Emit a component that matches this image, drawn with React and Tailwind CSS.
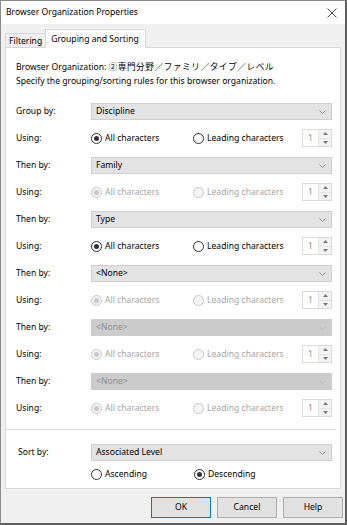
import React from 'react';

const font = { fontFamily: '"Noto Sans", "Noto Sans CJK JP", sans-serif' };

const Chevron = ({ disabled }) => (
  <svg width="7" height="4" viewBox="0 0 7 4" className="shrink-0">
    <polyline points="0.5,0.5 3.5,3.5 6.5,0.5" fill="none" stroke={disabled ? '#bdbdbd' : '#8a8a8a'} strokeWidth="0.9" />
  </svg>
);

const Select = ({ value, disabled }) => (
  <div
    className={`flex h-[17px] items-center justify-between border pl-[4px] pr-[5px] leading-none ${
      disabled ? 'border-[#cccccc] bg-[#cccccc] text-[#8d8d8d]' : 'border-[#cfcfcf] bg-[#e3e3e3] text-black'
    }`}
  >
    <span>{value}</span>
    <Chevron disabled={disabled} />
  </div>
);

const Radio = ({ checked, disabled, label }) => (
  <div className={`flex items-center gap-[3px] whitespace-nowrap ${disabled ? 'text-[#a6a6a6]' : 'text-black'}`}>
    <span
      className={`flex h-[11px] w-[11px] shrink-0 items-center justify-center rounded-full border ${
        disabled ? 'border-[#c8c8c8] bg-[#f4f4f4]' : 'border-[#333333] bg-white'
      }`}
    >
      {checked && <span className={`h-[5px] w-[5px] rounded-full ${disabled ? 'bg-[#c8c8c8]' : 'bg-[#333333]'}`} />}
    </span>
    <span>{label}</span>
  </div>
);

const Spinner = () => (
  <div className="flex h-[18px] w-[30px] border border-[#dadada] bg-white">
    <div className="flex-1 pl-[5px] text-[#8d8d8d] leading-[16px]">1</div>
    <div className="flex w-[13px] flex-col border-l border-[#e3e3e3]">
      <div className="flex flex-1 items-center justify-center border-b border-[#e3e3e3] bg-[#f3f3f3]">
        <svg width="5" height="3" viewBox="0 0 5 3">
          <polygon points="2.5,0 5,3 0,3" fill="#7a7a7a" />
        </svg>
      </div>
      <div className="flex flex-1 items-center justify-center bg-[#f3f3f3]">
        <svg width="5" height="3" viewBox="0 0 5 3">
          <polygon points="0,0 5,0 2.5,3" fill="#7a7a7a" />
        </svg>
      </div>
    </div>
  </div>
);

const groups = [
  { label: 'Group by:', value: 'Discipline', selDisabled: false, radiosDisabled: false },
  { label: 'Then by:', value: 'Family', selDisabled: false, radiosDisabled: true },
  { label: 'Then by:', value: 'Type', selDisabled: false, radiosDisabled: false },
  { label: 'Then by:', value: '<None>', selDisabled: false, radiosDisabled: true },
  { label: 'Then by:', value: '<None>', selDisabled: true, radiosDisabled: true },
  { label: 'Then by:', value: '<None>', selDisabled: true, radiosDisabled: true },
];

const Button = ({ children, primary }) => (
  <button
    className={`h-[21px] w-[60px] border bg-[#e1e1e1] text-black leading-none ${
      primary ? 'border-[#0078d7]' : 'border-[#adadad]'
    }`}
  >
    {children}
  </button>
);

export default function App() {
  return (
    <div
      className="flex h-[525px] w-[347px] flex-col border-t border-l border-r-2 border-b-2 border-t-[#8a8a8a] border-l-[#8a8a8a] border-r-[#5f5f5f] border-b-[#5f5f5f] bg-[#f0f0f0] text-[8.6px] text-black"
      style={font}
    >
      {/* Title bar */}
      <div className="flex h-[23px] shrink-0 items-center justify-between bg-white pl-[5px] pr-[8px]">
        <span>Browser Organization Properties</span>
        <svg width="10" height="10" viewBox="0 0 10 10">
          <path d="M0.5 0.5 L9.5 9.5 M9.5 0.5 L0.5 9.5" stroke="#333" strokeWidth="0.9" />
        </svg>
      </div>

      {/* Tabs */}
      <div className="mt-[5px] flex items-end pl-[4px]">
        <div className="mb-[-1px] flex h-[15px] items-center border-t border-l border-[#d9d9d9] bg-[#f0f0f0] pl-[3px] pr-[3px] leading-none">
          Filtering
        </div>
        <div className="relative z-10 mb-[-1px] flex h-[19px] items-center border-t border-l border-r border-[#d9d9d9] bg-white pl-[5px] pr-[6px] leading-none">
          Grouping and Sorting
        </div>
      </div>

      {/* Panel */}
      <div className="ml-[4px] w-[336px] border border-[#d9d9d9] bg-white pl-[10px] pr-[7px] pt-[12px] pb-[7px]">
        <div className="leading-[14px] whitespace-nowrap">
          <div>
            Browser Organization: <span className="tracking-[0.6px]">②専門分野／ファミリ／タイプ／レベル</span>
          </div>
          <div>Specify the grouping/sorting rules for this browser organization.</div>
        </div>

        <div className="mt-[15px] flex flex-col gap-[9px]">
          {groups.map((g, i) => (
            <div key={i} className="flex flex-col gap-[8px]">
              <div className="grid grid-cols-[75px_241px] items-center">
                <span className="leading-none">{g.label}</span>
                <Select value={g.value} disabled={g.selDisabled} />
              </div>
              <div className="grid h-[20px] grid-cols-[75px_102px_109px_30px] items-center leading-none">
                <span>Using:</span>
                <Radio checked disabled={g.radiosDisabled} label="All characters" />
                <Radio disabled={g.radiosDisabled} label="Leading characters" />
                <Spinner />
              </div>
            </div>
          ))}
        </div>

        <div className="mt-[11px] -ml-[10px] mr-[-3px] h-px bg-[#dcdcdc]" />

        <div className="mt-[14px] grid grid-cols-[75px_241px] items-center">
          <span className="pl-[2px] leading-none">Sort by:</span>
          <Select value="Associated Level" />
        </div>
        <div className="mt-[6px] grid h-[14px] grid-cols-[75px_103px_138px] items-center leading-none">
          <span />
          <Radio label="Ascending" />
          <Radio checked label="Descending" />
        </div>
      </div>

      {/* Buttons */}
      <div className="mt-[8px] flex justify-end gap-[6px] pr-[2px]">
        <Button primary>OK</Button>
        <Button>Cancel</Button>
        <Button>Help</Button>
      </div>
    </div>
  );
}
